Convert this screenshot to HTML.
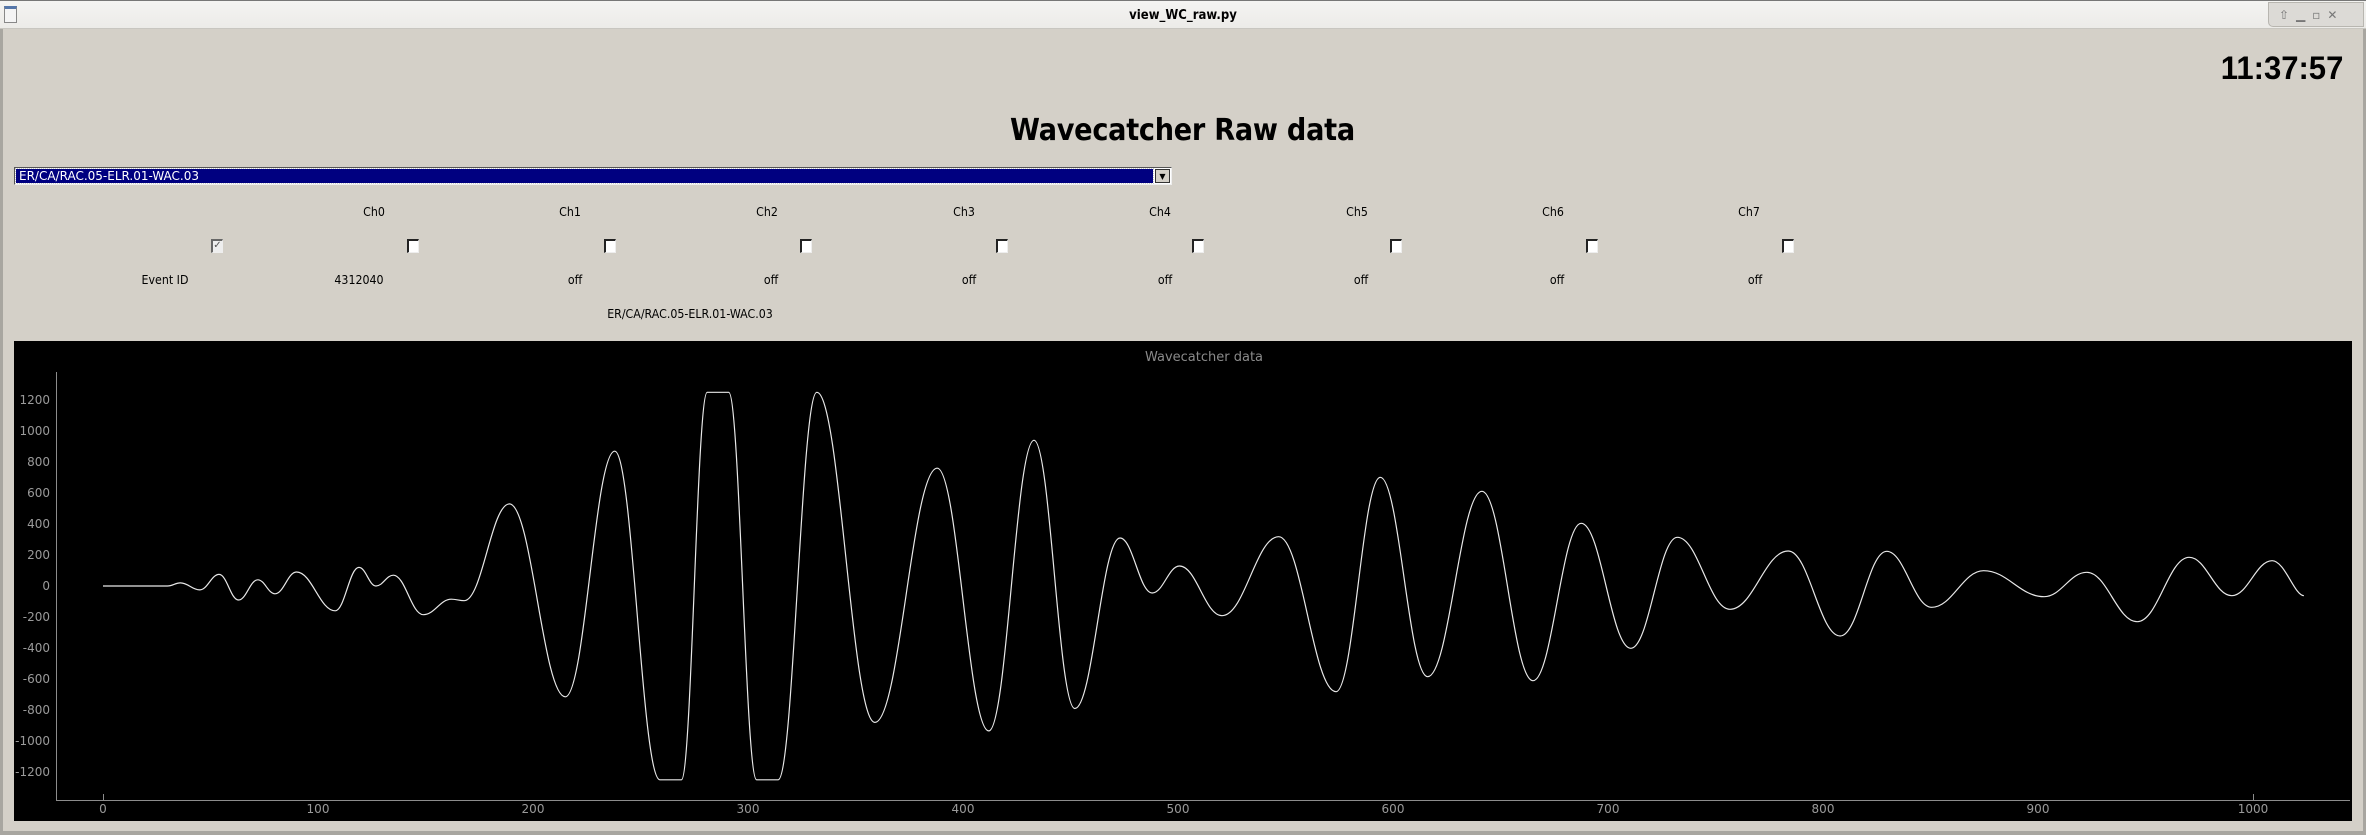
<!DOCTYPE html>
<html><head><meta charset="utf-8"><style>
*{margin:0;padding:0;box-sizing:border-box}
body{width:2366px;height:835px;background:#d4d0c8;position:relative;overflow:hidden;font-family:"DejaVu Sans","Liberation Sans",sans-serif;font-size:12px;color:#000}
.tb{position:absolute;left:0;top:0;width:2366px;height:29px;background:linear-gradient(#f4f4f2,#ecebe8);border-top:1px solid #777;border-bottom:1px solid #c8c6c0}
.tbt{position:absolute;left:0;width:2366px;top:7px;text-align:center;font-size:13px;font-weight:bold;font-family:"DejaVu Sans",sans-serif;transform:scaleX(0.9)}
.lb{position:absolute;left:0;top:29px;width:3px;height:806px;background:#a8a6a0}
.rb{position:absolute;right:0;top:29px;width:3px;height:806px;background:#a8a6a0}
.bb{position:absolute;left:0;top:831px;width:2366px;height:4px;background:#a8a6a0}
.t{position:absolute;white-space:nowrap;transform:translateX(-50%) scaleX(0.92)}
.cb{position:absolute;width:12px;height:14px;background:#fff;border-left:2px solid #222;border-top:2px solid #222;border-right:1px solid #eee;border-bottom:1px solid #eee}
</style></head><body>
<div class="tb">
 <div style="position:absolute;left:4px;top:5px;width:13px;height:17px;border:1px solid #888;background:#f4f4f4;border-top:3px solid #5577aa"></div>
 <div class="tbt">view_WC_raw.py</div>
 <div style="position:absolute;left:2268px;top:1px;width:96px;height:25px;background:#dcdad6;border:1px solid #b8b6b0;border-radius:0 0 0 5px;font-size:12px;color:#777;padding:5px 0 0 10px;letter-spacing:7px">⇧▁▫✕</div>
</div>
<div class="lb"></div><div class="rb"></div><div class="bb"></div>

<div style="position:absolute;right:23px;top:50px;font:bold 32px 'Liberation Sans',sans-serif;transform:scaleX(0.97);transform-origin:right">11:37:57</div>
<div style="position:absolute;left:1010px;top:113px;font:bold 30px 'DejaVu Sans',sans-serif;letter-spacing:-0.3px;transform:scaleX(0.905);transform-origin:left">Wavecatcher Raw data</div>

<div style="position:absolute;left:14px;top:167px;width:1158px;height:18px;background:#fff;border:1px solid #555;border-right-color:#eee;border-bottom-color:#eee">
 <div style="position:absolute;left:1px;top:1px;right:18px;bottom:1px;background:#000080;outline:1px dotted #ccc;color:#fff;font-size:12px;line-height:14px;padding-left:3px">ER/CA/RAC.05-ELR.01-WAC.03</div>
 <div style="position:absolute;right:1px;top:1px;width:15px;height:14px;background:#d4d0c8;border:1px solid #333;font-size:8px;text-align:center;line-height:13px">▼</div>
</div>

<div class="t" style="left:374px;top:205px">Ch0</div>
<div class="t" style="left:570px;top:205px">Ch1</div>
<div class="t" style="left:767px;top:205px">Ch2</div>
<div class="t" style="left:964px;top:205px">Ch3</div>
<div class="t" style="left:1160px;top:205px">Ch4</div>
<div class="t" style="left:1357px;top:205px">Ch5</div>
<div class="t" style="left:1553px;top:205px">Ch6</div>
<div class="t" style="left:1749px;top:205px">Ch7</div>

<div class="cb" style="left:211px;top:239px;background:#eee;border-color:#666 #eee #eee #666;font-size:10px;line-height:10px;color:#555;text-align:center">✓</div>
<div class="cb" style="left:407px;top:239px"></div>
<div class="cb" style="left:604px;top:239px"></div>
<div class="cb" style="left:800px;top:239px"></div>
<div class="cb" style="left:996px;top:239px"></div>
<div class="cb" style="left:1192px;top:239px"></div>
<div class="cb" style="left:1390px;top:239px"></div>
<div class="cb" style="left:1586px;top:239px"></div>
<div class="cb" style="left:1782px;top:239px"></div>

<div class="t" style="left:165px;top:273px">Event ID</div>
<div class="t" style="left:359px;top:273px">4312040</div>
<div class="t" style="left:575px;top:273px">off</div>
<div class="t" style="left:771px;top:273px">off</div>
<div class="t" style="left:969px;top:273px">off</div>
<div class="t" style="left:1165px;top:273px">off</div>
<div class="t" style="left:1361px;top:273px">off</div>
<div class="t" style="left:1557px;top:273px">off</div>
<div class="t" style="left:1755px;top:273px">off</div>
<div class="t" style="left:690px;top:307px">ER/CA/RAC.05-ELR.01-WAC.03</div>

<svg style="position:absolute;left:0;top:0" width="2366" height="835" font-family="DejaVu Sans, sans-serif" font-size="12">
 <rect x="14" y="341" width="2338" height="480" fill="#000"/>
 <text x="1204" y="361" fill="#8a8a8a" font-size="13" text-anchor="middle">Wavecatcher data</text>
 <g stroke="#8c8c8c" stroke-width="1" fill="none">
  <line x1="56.5" y1="372" x2="56.5" y2="800"/>
  <line x1="56" y1="800.5" x2="2350" y2="800.5"/>
  <line x1="103.5" y1="794" x2="103.5" y2="800"/>
  <line x1="2253.5" y1="794" x2="2253.5" y2="800"/>
 </g>
 <g fill="#9a9a9a" text-anchor="end">
  <text x="50" y="404">1200</text><text x="50" y="435">1000</text><text x="50" y="466">800</text><text x="50" y="497">600</text><text x="50" y="528">400</text><text x="50" y="559">200</text><text x="50" y="590">0</text><text x="50" y="621">-200</text><text x="50" y="652">-400</text><text x="50" y="683">-600</text><text x="50" y="714">-800</text><text x="50" y="745">-1000</text><text x="50" y="776">-1200</text>
 </g>
 <g fill="#9a9a9a" text-anchor="middle">
  <text x="103" y="813">0</text><text x="318" y="813">100</text><text x="533" y="813">200</text><text x="748" y="813">300</text><text x="963" y="813">400</text><text x="1178" y="813">500</text><text x="1393" y="813">600</text><text x="1608" y="813">700</text><text x="1823" y="813">800</text><text x="2038" y="813">900</text><text x="2253" y="813">1000</text>
 </g>
 <path id="wave" fill="none" stroke="#e8e8e8" stroke-width="1.2" d=""/>
</svg>
<script>
var P=[[103,586],[167.5,586],[180.4,582.9],[199.8,589.9],[219.1,574.4],[238.5,600],[257.8,579.8],[275,593.8],[296.5,572],[335.2,610.8],[358.9,567.4],[376,586],[393.3,575.2],[423.4,614.7],[451.3,599.2],[464.2,600.7],[509.4,503.9],[565.3,696.8],[614.7,451.2],[659.9,779.8],[681.4,779.8,1],[707.2,392.3],[728.7,392.3,1],[756.6,779.8],[778.1,779.8,1],[816.8,392.3],[874.9,722.4],[937.2,468.2],[988.8,730.9],[1034,440.3],[1074.8,708.5],[1120,538],[1152.2,593],[1179.5,566],[1222,615.7],[1278.7,536.7],[1336,691.7],[1380.3,477.3],[1427.6,676.7],[1481.9,491.3],[1533,680.7],[1581.2,523.3],[1630.8,648.3],[1677.3,537.3],[1730,609.3],[1788.2,551],[1840.2,636],[1886.7,551.3],[1931.7,607.3],[1983.6,570.7],[2044.1,596.7],[2086.8,572.3],[2137.2,621.7],[2189.2,557.3],[2231.8,595.7],[2272.1,560.7],[2303.9,595.7]];
var d="M"+P[0][0]+" "+P[0][1]+" L"+P[1][0]+" "+P[1][1];
for(var i=2;i<P.length;i++){var a=P[i-1],b=P[i];
 if(b[2]){d+=" L"+b[0]+" "+b[1];continue;}
 var k=(i==P.length-1)?0.3:0.4;var dx=b[0]-a[0];
 d+=" C"+(a[0]+dx*0.4)+" "+a[1]+" "+(b[0]-dx*k)+" "+b[1]+" "+b[0]+" "+b[1];}
document.getElementById("wave").setAttribute("d",d);
</script>
</body></html>
